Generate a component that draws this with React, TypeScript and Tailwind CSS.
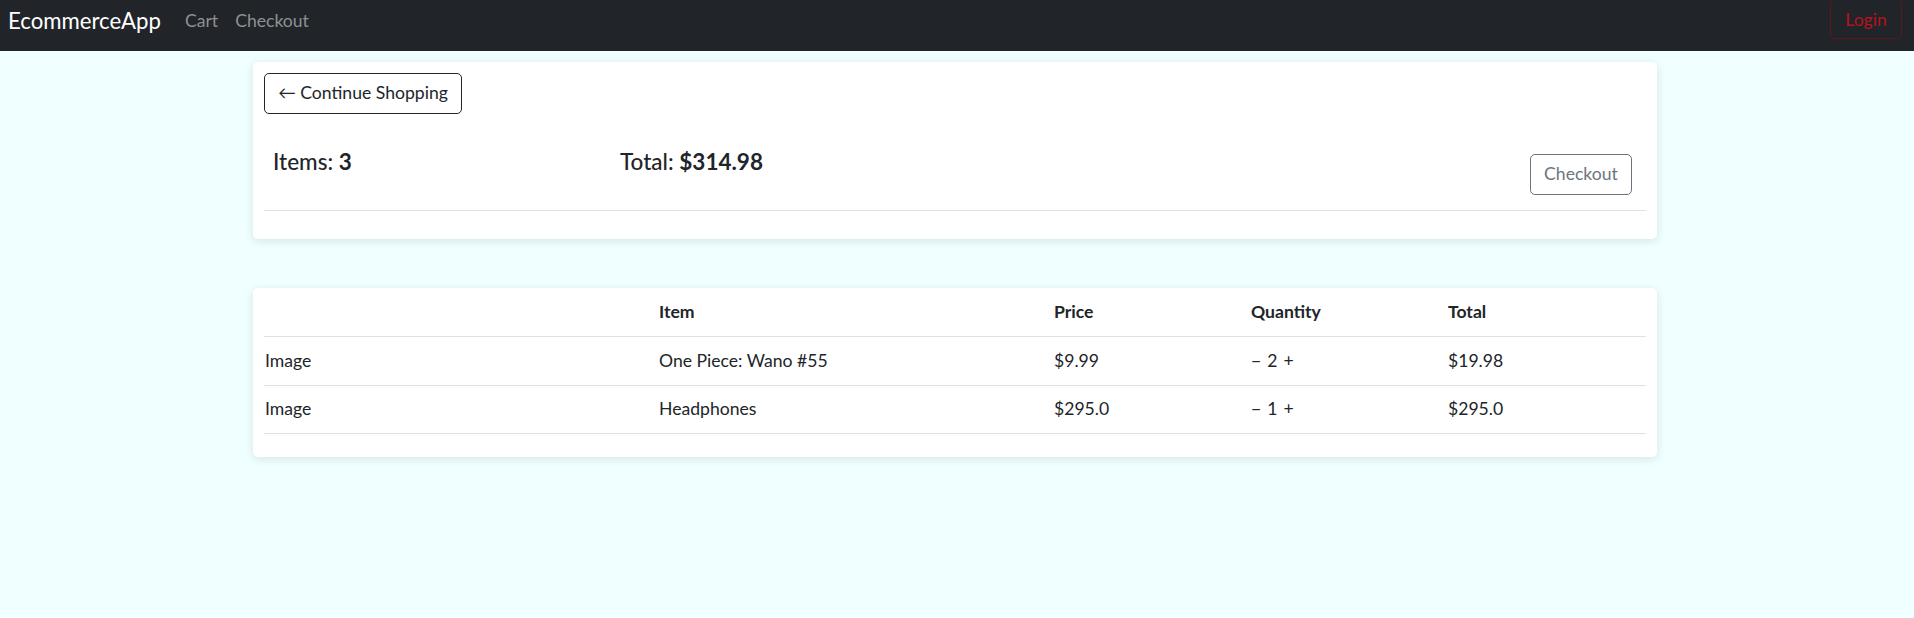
import React from "react";

const rows = [
  { item: "One Piece: Wano #55", price: "$9.99", qty: 2, total: "$19.98" },
  { item: "Headphones", price: "$295.0", qty: 1, total: "$295.0" },
];

export default function App() {
  return (
    <div
      className="min-h-[618px] bg-[#f0ffff] text-[#212529]"
      style={{ fontFamily: 'Lato, "Noto Sans", sans-serif' }}
    >
      <nav className="h-[51px] bg-[#212529] flex items-start">
        <div className="h-[39px] w-full flex items-center pl-[8px] pr-[12px]">
          <span className="pt-[3px] text-[22.2px] text-white leading-none">EcommerceApp</span>
          <span className="pt-[3px] ml-[24px] text-[17.6px] text-[#8e9093]">Cart</span>
          <span className="pt-[3px] ml-[17px] text-[17.6px] text-[#8e9093]">Checkout</span>
          <button className="ml-auto h-[40px] -mt-[1px] pt-[3px] w-[72px] rounded-[5px] border border-[#5e171c] text-[#b3141d] text-[17.6px]">
            Login
          </button>
        </div>
      </nav>

      <div className="ml-[253px] w-[1404px] pt-[11px]">
        <div className="bg-white rounded-[5px] shadow-[0_2px_10px_rgba(0,40,40,0.12)] px-[11px] pt-[11px] pb-[28px]">
          <button className="h-[41px] w-[198px] rounded-[5px] border border-[#212529] text-[17.6px] text-[#212529] flex items-center justify-center">
            ← Continue Shopping
          </button>
          <div className="flex items-start mt-[35px]">
            <div className="w-[346px] pl-[9px] text-[22.5px] leading-[26px]">
              <span className="font-medium">Items: </span>
              <span className="font-bold">3</span>
            </div>
            <div className="flex-1 pl-[10px] text-[22.5px] leading-[26px]">
              <span className="font-medium">Total: </span>
              <span className="font-bold">$314.98</span>
            </div>
            <button className="mt-[5px] mr-[14px] h-[41px] w-[102px] rounded-[5px] border border-[#6c757d] text-[#6c757d] text-[17.6px]">
              Checkout
            </button>
          </div>
          <div className="mt-[15px] border-t border-[#dee2e6]" />
        </div>

        <div className="mt-[49px] bg-white rounded-[5px] shadow-[0_2px_10px_rgba(0,40,40,0.12)] px-[11px] pb-[23px]">
          <div className="grid grid-cols-[395px_395px_197px_197px_198px] text-[17.6px]">
            <div className="h-[49px] flex items-center border-b border-[#dee2e6] font-bold"></div>
            <div className="h-[49px] flex items-center border-b border-[#dee2e6] font-bold">Item</div>
            <div className="h-[49px] flex items-center border-b border-[#dee2e6] font-bold">Price</div>
            <div className="h-[49px] flex items-center border-b border-[#dee2e6] font-bold">Quantity</div>
            <div className="h-[49px] flex items-center border-b border-[#dee2e6] font-bold">Total</div>
            {rows.map((r) => (
              <React.Fragment key={r.item}>
                <div className="h-[48.5px] flex items-center border-b border-[#dee2e6] pl-[1px]">Image</div>
                <div className="h-[48.5px] flex items-center border-b border-[#dee2e6]">{r.item}</div>
                <div className="h-[48.5px] flex items-center border-b border-[#dee2e6]">{r.price}</div>
                <div className="h-[48.5px] flex items-center border-b border-[#dee2e6]">
                  <span className="mr-[6px]">−</span>
                  <span>{r.qty}</span>
                  <span className="ml-[6px]">+</span>
                </div>
                <div className="h-[48.5px] flex items-center border-b border-[#dee2e6]">{r.total}</div>
              </React.Fragment>
            ))}
          </div>
        </div>
      </div>
    </div>
  );
}
